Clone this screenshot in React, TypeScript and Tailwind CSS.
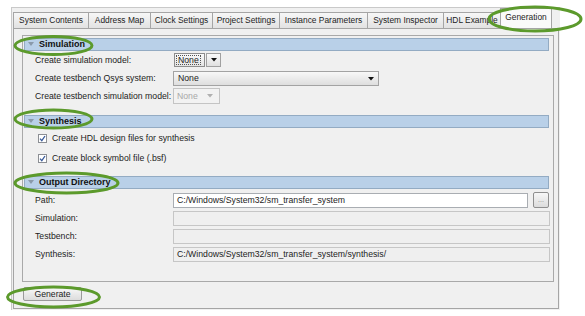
import React from "react";

const tabs = [
  { label: "System Contents", w: "w-[76px]" },
  { label: "Address Map", w: "w-[63px]" },
  { label: "Clock Settings", w: "w-[63px]" },
  { label: "Project Settings", w: "w-[68px]" },
  { label: "Instance Parameters", w: "w-[89px]" },
  { label: "System Inspector", w: "w-[77px]" },
  { label: "HDL Example", w: "w-[58px]" },
];

function SectionBar({ title }: { title: string }) {
  return (
    <div className="flex items-center h-[13px] w-[525px] bg-[#b9d0e8] border border-[#93abc3] pl-[3px]">
      <svg width="6" height="5" viewBox="0 0 6 5" className="mr-[5px]">
        <path d="M0 0 L6 0 L3 4 Z" fill="#8a9aaa" />
      </svg>
      <span className="font-bold text-[#111] leading-none text-[9px]">{title}</span>
    </div>
  );
}

function Arrow({ color = "#111" }: { color?: string }) {
  return (
    <svg width="6" height="4" viewBox="0 0 6 4">
      <path d="M0 0 L6 0 L3 3.5 Z" fill={color} />
    </svg>
  );
}

function Check({ label }: { label: string }) {
  return (
    <div className="flex items-center h-[14px] pl-[14px]">
      <div className="w-[9px] h-[9px] bg-white border border-[#8c8f94] flex items-center justify-center mr-[5px]">
        <svg width="7" height="7" viewBox="0 0 7 7">
          <path d="M1 3.6 L2.8 5.6 L6 1" stroke="#3a5b9a" strokeWidth="1.3" fill="none" />
        </svg>
      </div>
      <span className="whitespace-nowrap">{label}</span>
    </div>
  );
}

function Field({ value = "", enabled = false, w = "w-[377px]" }: { value?: string; enabled?: boolean; w?: string }) {
  return (
    <div
      className={
        "flex items-center h-[15px] px-[3px] border whitespace-nowrap " +
        w +
        (enabled ? " bg-white border-[#a9adb2]" : " bg-[#efefef] border-[#c6c6c6]")
      }
    >
      {value}
    </div>
  );
}

export default function App() {
  return (
    <div className="relative w-[585px] h-[316px] bg-white overflow-hidden pt-[7px] pl-[11px] font-['Liberation_Sans',Arial,sans-serif] text-[8.7px] text-[#1c1c1c] leading-none">
      <div className="w-[549px] h-[303px] bg-[#f0f0f0] border-t border-l border-[#c9c9c9]">
        {/* tab strip */}
        <div className="flex items-end h-[20px] pl-[1px]">
          {tabs.map((t) => (
            <div
              key={t.label}
              className={
                "flex items-center justify-center shrink-0 whitespace-nowrap overflow-hidden h-[16px] border border-b-0 border-[#a5a5a5] -mr-px bg-gradient-to-b from-[#f7f7f7] to-[#e2e2e2] text-[8.4px] " +
                t.w
              }
            >
              {t.label}
            </div>
          ))}
          <div className="flex items-center justify-center shrink-0 whitespace-nowrap h-[20px] w-[52px] border border-b-0 border-[#a5a5a5] bg-[#fafafa] pb-[2px] text-[8.4px]">
            Generation
          </div>
        </div>

        {/* panel */}
        <div className="ml-px w-[546px] h-[281px] border border-[#a5a5a5] bg-[#f0f0f0] pt-[6px] pl-[8px]">
          <div className="w-[532px] h-[247px] border border-[#a9a9a9] pt-[2px] pl-px">
            <SectionBar title="Simulation" />

            <div className="flex items-center h-[14px] mt-[2px] pl-[11px] whitespace-nowrap">
              <span className="w-[139px] shrink-0">Create simulation model:</span>
              <div className="flex items-center h-[14px] w-[31px] border border-[#8d8d8d] bg-gradient-to-b from-[#fafafa] to-[#e4e4e4] px-[1px]">
                <div className="flex items-center h-[10px] px-[1px] border border-dotted border-[#555]">None</div>
              </div>
              <div className="flex items-center justify-center h-[14px] w-[15px] ml-px border border-[#a0a0a0] bg-gradient-to-b from-[#fafafa] to-[#e0e0e0]">
                <Arrow />
              </div>
            </div>

            <div className="flex items-center h-[15px] mt-[4px] pl-[11px] whitespace-nowrap">
              <span className="w-[138px] shrink-0">Create testbench Qsys system:</span>
              <div className="flex items-center justify-between h-[15px] w-[206px] border border-[#a3a3a3] bg-gradient-to-b from-[#f8f8f8] to-[#dedede] pl-[4px] pr-[4px]">
                <span>None</span>
                <Arrow />
              </div>
            </div>

            <div className="flex items-center h-[16px] mt-[2px] pl-[11px] whitespace-nowrap">
              <span className="w-[138px] shrink-0">Create testbench simulation model:</span>
              <div className="flex items-center justify-between h-[16px] w-[47px] border border-[#c4c4c4] bg-[#f2f2f2] pl-[3px] pr-[6px] text-[#a8a8a8]">
                <span>None</span>
                <Arrow color="#b0b0b0" />
              </div>
            </div>

            <div className="mt-[11px]">
              <SectionBar title="Synthesis" />
            </div>
            <div className="mt-[3px]">
              <Check label="Create HDL design files for synthesis" />
            </div>
            <div className="mt-[6px]">
              <Check label="Create block symbol file (.bsf)" />
            </div>

            <div className="mt-[11px]">
              <SectionBar title="Output Directory" />
            </div>

            <div className="flex items-center h-[16px] mt-[3px] pl-[11px]">
              <span className="w-[138px] shrink-0">Path:</span>
              <Field value="C:/Windows/System32/sm_transfer_system" enabled w="w-[355px]" />
              <div className="flex items-end justify-center h-[16px] w-[16px] ml-[5px] pb-[4px] rounded-[2px] border border-[#8f8f8f] bg-gradient-to-b from-[#f7f7f7] to-[#dcdcdc] text-[7px] text-[#888]">
                ...
              </div>
            </div>

            <div className="flex items-center h-[15px] mt-[3px] pl-[11px]">
              <span className="w-[138px] shrink-0">Simulation:</span>
              <Field />
            </div>
            <div className="flex items-center h-[15px] mt-[3px] pl-[11px]">
              <span className="w-[138px] shrink-0">Testbench:</span>
              <Field />
            </div>
            <div className="flex items-center h-[15px] mt-[3px] pl-[11px]">
              <span className="w-[138px] shrink-0">Synthesis:</span>
              <Field value="C:/Windows/System32/sm_transfer_system/synthesis/" />
            </div>
          </div>

          <div className="flex items-center justify-center mt-[5px] ml-[1px] h-[14px] w-[59px] border border-[#9a9a9a] rounded-[2px] bg-gradient-to-b from-[#f8f8f8] to-[#dcdcdc]">
            Generate
          </div>
        </div>
      </div>

      {/* annotation circles */}
      <svg className="absolute inset-0 pointer-events-none" width="585" height="316" viewBox="0 0 585 316">
        <g fill="none" stroke="#5c9a2c" strokeWidth="3">
          <ellipse cx="53.5" cy="45.5" rx="38.5" ry="9" />
          <ellipse cx="53.5" cy="119" rx="38.5" ry="9" />
          <ellipse cx="66.5" cy="183" rx="51.5" ry="10" />
          <ellipse cx="53.5" cy="297" rx="46" ry="10" />
          <ellipse cx="535" cy="19" rx="46" ry="12" />
        </g>
      </svg>
    </div>
  );
}
